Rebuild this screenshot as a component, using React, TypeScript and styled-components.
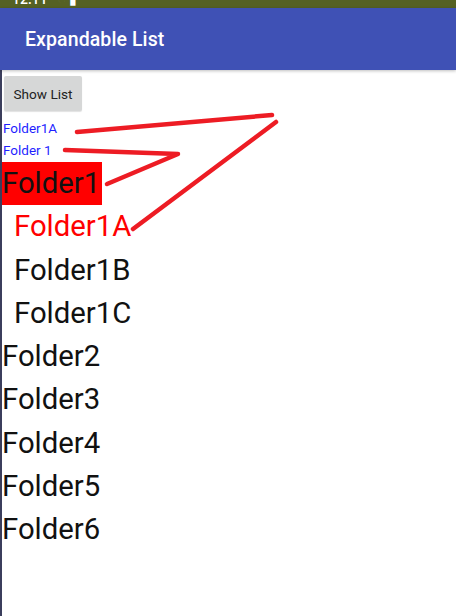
import React, { useState } from "react";
import styled, { createGlobalStyle } from "styled-components";

const GlobalStyle = createGlobalStyle`
  html, body {
    margin: 0;
    padding: 0;
    background: #fff;
    font-family: Roboto, "Noto Sans", sans-serif;
  }
`;

const Screen = styled.div`
  position: relative;
  width: 456px;
  height: 616px;
  overflow: hidden;
  display: flex;
  flex-direction: column;
`;

const StatusBar = styled.div`
  height: 8px;
  flex: none;
  background: #556123;
  overflow: hidden;
  display: flex;
  align-items: flex-end;
  gap: 10px;
  padding-left: 12px;
  color: #fff;
  font-size: 14px;
  font-weight: 500;
  line-height: 8px;

  span {
    display: block;
    transform: translateY(-5px);
  }
`;

const AppBar = styled.header`
  height: 62px;
  flex: none;
  background: #3f51b5;
  display: flex;
  align-items: center;
  padding-left: 25px;
  box-shadow: 0 1px 3px rgba(0, 0, 0, 0.25);
  position: relative;
  z-index: 1;

  h1 {
    margin: 0;
    color: #fff;
    font-size: 19.5px;
    font-weight: 500;
    letter-spacing: 0.1px;
  }
`;

const Content = styled.main`
  flex: 1;
  border-left: 2px solid #3b3e5c;
  display: flex;
  flex-direction: column;
  align-items: flex-start;
`;

const ShowButton = styled.button`
  margin: 6px 0 0 2px;
  width: 78px;
  height: 35px;
  border: none;
  border-radius: 2px;
  background: #d6d7d7;
  box-shadow: 0 1px 1px rgba(0, 0, 0, 0.12);
  font-family: Roboto, sans-serif;
  font-size: 13.6px;
  color: #222;
  padding: 0;
`;

const DebugText = styled.div`
  font-size: 13.5px;
  line-height: 22px;
  color: #1f1fff;
  padding-left: 1px;
  &:first-of-type {
    margin-top: 6px;
  }
`;

const List = styled.ul`
  list-style: none;
  margin: 1px 0 0;
  padding: 0;
  align-self: stretch;
`;

const Row = styled.li<{ $child?: boolean; $selected?: boolean; $active?: boolean }>`
  font-size: 29.3px;
  line-height: 43.3px;
  height: 43.3px;
  padding-left: ${(p) => (p.$child ? "12px" : "0")};
  color: ${(p) => (p.$active ? "#ff0000" : "#111")};

  span {
    display: inline-block;
    background: ${(p) => (p.$selected ? "#ff0000" : "transparent")};
    padding-right: 2px;
  }
`;

const Annotations = styled.svg`
  position: absolute;
  left: 0;
  top: 0;
  pointer-events: none;
`;

const folders = [
  { name: "Folder1", children: ["Folder1A", "Folder1B", "Folder1C"] },
  { name: "Folder2", children: [] },
  { name: "Folder3", children: [] },
  { name: "Folder4", children: [] },
  { name: "Folder5", children: [] },
  { name: "Folder6", children: [] },
];

export default function App() {
  const [open, setOpen] = useState<string>("Folder1");
  const selectedGroup = "Folder1";
  const selectedChild = "Folder1A";

  return (
    <Screen>
      <GlobalStyle />
      <StatusBar>
        <span>12:11</span>
        <span>◔ ▮</span>
      </StatusBar>
      <AppBar>
        <h1>Expandable List</h1>
      </AppBar>
      <Content>
        <ShowButton>Show List</ShowButton>
        <DebugText>{selectedChild}</DebugText>
        <DebugText>Folder 1</DebugText>
        <List>
          {folders.map((f) => (
            <React.Fragment key={f.name}>
              <Row $selected={f.name === selectedGroup} onClick={() => setOpen(f.name)}>
                <span>{f.name}</span>
              </Row>
              {open === f.name &&
                f.children.map((c) => (
                  <Row key={c} $child $active={c === selectedChild}>
                    {c}
                  </Row>
                ))}
            </React.Fragment>
          ))}
        </List>
      </Content>
      <Annotations width="456" height="616" viewBox="0 0 456 616">
        <g fill="none" stroke="#ed1c24" strokeWidth="4.5" strokeLinecap="round" strokeLinejoin="round">
          <polyline points="77,132 272,115" />
          <polyline points="276,122 133,229" />
          <polyline points="65,150 178,154 107,184" />
        </g>
      </Annotations>
    </Screen>
  );
}
